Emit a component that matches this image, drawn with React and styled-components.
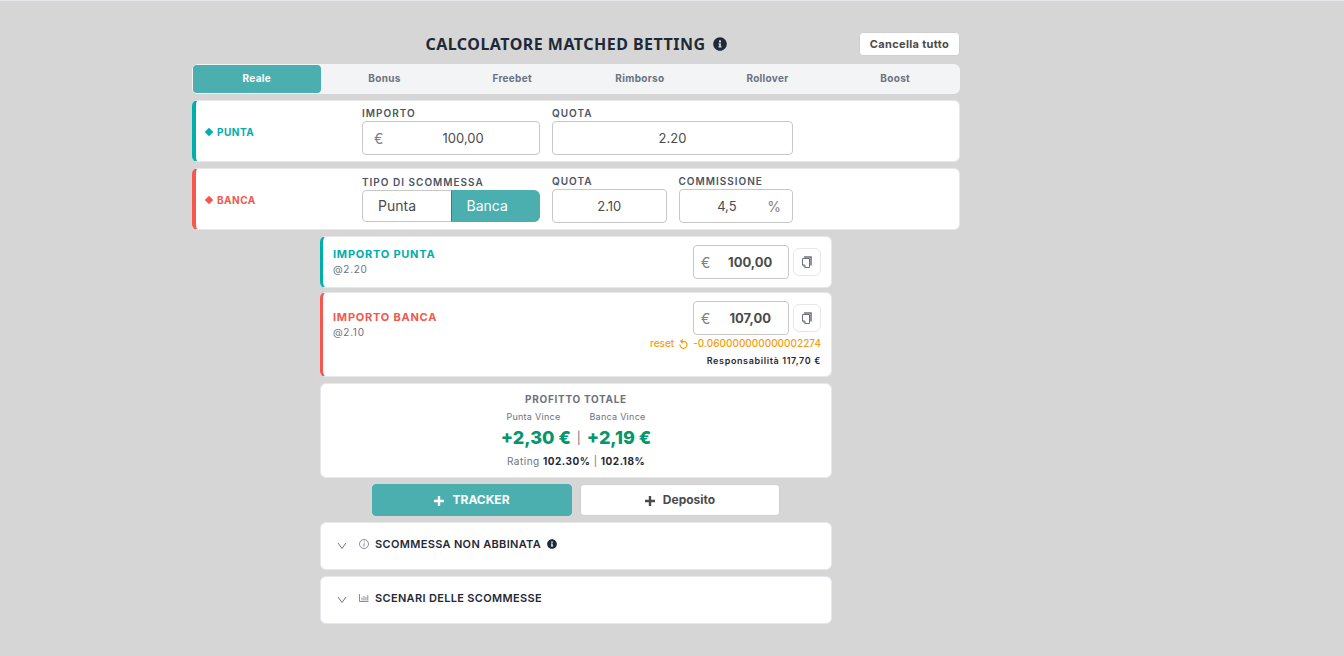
import { useState } from "react";
import styled, { createGlobalStyle } from "styled-components";
import { FaInfoCircle } from "react-icons/fa";

const GlobalStyle = createGlobalStyle`
  *, *::before, *::after {
    box-sizing: border-box;
  }
  body {
    margin: 0;
    background-color: #d6d6d6;
    color: #1f2937;
    font-family: "Inter", sans-serif;
    font-size: 14px;
  }
  button, input {
    font-family: inherit;
  }
`;

const TABS = ["Reale", "Bonus", "Freebet", "Rimborso", "Rollover", "Boost"];

const CopyIcon = () => (
  <svg width="12" height="12" viewBox="0 0 12 12" fill="none" stroke="currentColor" aria-hidden="true">
    <path d="M1.5 2.5H8.5V11.5H4L1.5 9Z" />
    <path d="M1.5 9H4V11.5" />
    <path d="M3 1H10V9.5" strokeWidth="1.5" />
  </svg>
);

const ResetIcon = () => (
  <svg width="9" height="10" viewBox="0 0 9 10" fill="none" stroke="currentColor" strokeWidth="1.2" aria-hidden="true">
    <path d="M1 5.5A3.5 3.5 0 1 0 4.5 2.3H1.8" />
    <path d="M3.8 .4 1.8 2.3 3.8 4.2" />
  </svg>
);

const PlusIcon = () => (
  <svg width="10" height="10" viewBox="0 0 10 10" fill="none" stroke="currentColor" strokeWidth="2.4" aria-hidden="true">
    <path d="M5 0V10M0 5H10" />
  </svg>
);

const ChevronIcon = () => (
  <svg width="10" height="8" viewBox="0 0 10 8" fill="none" stroke="currentColor" aria-hidden="true">
    <path d="M1 1 5 6.5 9 1" />
  </svg>
);

const CircleInfoIcon = () => (
  <svg width="10" height="10" viewBox="0 0 10 10" fill="none" stroke="currentColor" strokeWidth=".8" aria-hidden="true">
    <circle cx="5" cy="5" r="4.5" />
    <path d="M5.4 2.2 5.2 3.2M5.2 4.2 4.8 7.6" />
  </svg>
);

const ChartIcon = () => (
  <svg width="10" height="10" viewBox="0 0 10 10" fill="none" stroke="currentColor" strokeWidth=".8" aria-hidden="true">
    <path d="M.5 1V8.5H9.5" />
    <path d="M3 7.5V4.5M5 7.5V3M7 7.5V4M8.8 7.5V2" />
  </svg>
);

const NumberField = ({ id, label, value, prefix, suffix, wide }) => (
  <Field $wide={wide}>
    <FieldLabel htmlFor={id}>{label}</FieldLabel>
    <InputBox>
      {prefix && <Affix $side="left">{prefix}</Affix>}
      <Input id={id} defaultValue={value} $suffixed={!!suffix} />
      {suffix && <Affix $side="right">{suffix}</Affix>}
    </InputBox>
  </Field>
);

const Amount = ({ label, value }) => (
  <AmountRow>
    <AmountBox>
      <span>€</span>
      <AmountInput aria-label={label} defaultValue={value} />
    </AmountBox>
    <CopyButton type="button" aria-label={`Copia ${label}`}>
      <CopyIcon />
    </CopyButton>
  </AmountRow>
);

const App = () => {
  const [tab, setTab] = useState("Reale");
  const [betType, setBetType] = useState("Banca");

  return (
    <>
      <GlobalStyle />
      <Page>
        <Calculator>
          <Header>
            <Title>
              CALCOLATORE MATCHED BETTING <FaInfoCircle size={14} />
            </Title>
            <ClearButton type="button">Cancella tutto</ClearButton>
          </Header>

          <Tabs>
            {TABS.map((name) => (
              <Tab key={name} type="button" $active={tab === name} onClick={() => setTab(name)}>
                {name}
              </Tab>
            ))}
          </Tabs>

          <BetCard $accent={teal}>
            <BetName $accent={teal}>PUNTA</BetName>
            <Fields>
              <NumberField id="importo" label="IMPORTO" value="100,00" prefix="€" wide />
              <NumberField id="quota-punta" label="QUOTA" value="2.20" />
            </Fields>
          </BetCard>

          <BetCard $accent={red}>
            <BetName $accent={red}>BANCA</BetName>
            <Fields>
              <TypeField>
                <TypeLegend id="tipo">TIPO DI SCOMMESSA</TypeLegend>
                <Toggle role="radiogroup" aria-labelledby="tipo">
                  {["Punta", "Banca"].map((type) => (
                    <ToggleOption key={type} $active={betType === type}>
                      <HiddenRadio
                        type="radio"
                        name="tipo"
                        checked={betType === type}
                        onChange={() => setBetType(type)}
                      />
                      {type}
                    </ToggleOption>
                  ))}
                </Toggle>
              </TypeField>
              <NumberField id="quota-banca" label="QUOTA" value="2.10" />
              <NumberField id="commissione" label="COMMISSIONE" value="4,5" suffix="%" />
            </Fields>
          </BetCard>

          <Results>
            <ResultCard $accent={teal}>
              <ResultHeading>
                <ResultName $accent={teal}>IMPORTO PUNTA</ResultName>
                <Odds>@2.20</Odds>
              </ResultHeading>
              <Amount label="Importo punta" value="100,00" />
            </ResultCard>

            <ResultCard $accent={red}>
              <ResultHeading $lowered>
                <ResultName $accent={red}>IMPORTO BANCA</ResultName>
                <Odds>@2.10</Odds>
              </ResultHeading>
              <ResultSide>
                <Amount label="Importo banca" value="107,00" />
                <ResetButton type="button">
                  reset <ResetIcon /> -0.060000000000002274
                </ResetButton>
                <Liability>Responsabilità 117,70 €</Liability>
              </ResultSide>
            </ResultCard>

            <ProfitCard>
              <ProfitTitle>PROFITTO TOTALE</ProfitTitle>
              <Outcomes>
                <span>Punta Vince</span>
                <span>Banca Vince</span>
              </Outcomes>
              <Profits>
                <Profit>+2,30 €</Profit>
                <span>|</span>
                <Profit>+2,19 €</Profit>
              </Profits>
              <Rating>
                Rating <b>102.30%</b> | <b>102.18%</b>
              </Rating>
            </ProfitCard>

            <Actions>
              <ActionButton type="button" $primary>
                <PlusIcon /> TRACKER
              </ActionButton>
              <ActionButton type="button">
                <PlusIcon /> Deposito
              </ActionButton>
            </Actions>

            <Panel type="button" aria-expanded="false">
              <ChevronIcon />
              <PanelTitle>
                <CircleInfoIcon /> SCOMMESSA NON ABBINATA <InfoMark size={10} />
              </PanelTitle>
            </Panel>
            <Panel type="button" aria-expanded="false">
              <ChevronIcon />
              <PanelTitle>
                <ChartIcon /> SCENARI DELLE SCOMMESSE
              </PanelTitle>
            </Panel>
          </Results>
        </Calculator>
      </Page>
    </>
  );
};

export default App;

const teal = "#00aeab";
const red = "#f4574d";

const Page = styled.main`
  min-height: 100vh;
  border-top: 1px solid #e5e7eb;
  padding: 31px 192px 32px 0;
`;

const Calculator = styled.div`
  display: flex;
  flex-direction: column;
  gap: 6px;
  max-width: 768px;
  margin: 0 auto;
`;

const Header = styled.header`
  display: grid;
  grid-template-columns: 1fr auto 1fr;
  align-items: center;
  height: 24px;
  margin-bottom: 2px;
`;

const Title = styled.h1`
  grid-column: 2;
  display: flex;
  align-items: center;
  gap: 7px;
  margin: 0;
  font-family: "Noto Sans", sans-serif;
  font-size: 16px;
  font-weight: 700;
  line-height: 24px;
  letter-spacing: 0.03em;
`;

const ClearButton = styled.button`
  justify-self: end;
  height: 24px;
  padding: 0 10px;
  border: 1px solid #d0d0d0;
  border-radius: 4px;
  background-color: #fff;
  color: #4b4b4b;
  font-size: 11px;
  font-weight: 700;
  letter-spacing: 0.03em;
  cursor: pointer;
`;

const Tabs = styled.nav`
  display: flex;
  padding: 1px;
  border-radius: 6px;
  background-color: #f3f4f6;
`;

const Tab = styled.button`
  flex: 1;
  height: 28px;
  padding: 0 0 2px;
  border: none;
  border-radius: 4px;
  background-color: ${({ $active }) => ($active ? "#4aafae" : "transparent")};
  color: ${({ $active }) => ($active ? "#fff" : "#6b7280")};
  font-size: 10px;
  font-weight: 700;
  letter-spacing: 0.03em;
  cursor: pointer;
`;

const Card = styled.section`
  border: 1px solid #e5e7eb;
  border-radius: 6px;
  background-color: #fff;
`;

const BetCard = styled(Card)`
  display: grid;
  grid-template-columns: 1fr minmax(0, 431px) 1fr;
  align-items: center;
  padding: 6px 0;
  border-left: 4px solid ${({ $accent }) => $accent};
`;

const BetName = styled.h2`
  display: flex;
  align-items: center;
  gap: 5px;
  margin: 0;
  padding: 2px 0 0 10px;
  color: ${({ $accent }) => $accent};
  font-size: 10px;
  font-weight: 700;
  letter-spacing: 0.05em;

  &::before {
    content: "";
    width: 6px;
    height: 6px;
    background-color: currentColor;
    transform: rotate(45deg);
  }
`;

const Fields = styled.div`
  display: flex;
  align-items: center;
  gap: 12px;
`;

const Field = styled.div`
  flex: ${({ $wide }) => ($wide ? "0 1 178px" : "1 1 0")};
  min-width: 0;
`;

const FieldLabel = styled.label`
  display: block;
  padding-bottom: 2px;
  color: #4b5563;
  font-size: 10px;
  font-weight: 600;
  line-height: 12px;
  letter-spacing: 0.1em;
`;

const InputBox = styled.div`
  display: flex;
  align-items: center;
  height: 34px;
  border: 1px solid #c8c8c8;
  border-radius: 4px;
  background-color: #fff;
`;

const Affix = styled.span`
  color: #808080;
  font-size: 14px;
  padding: ${({ $side }) => ($side === "left" ? "0 4px 0 11px" : "0 11px 0 4px")};
`;

const Input = styled.input`
  flex: 1;
  width: 0;
  min-width: 0;
  padding: ${({ $suffixed }) => ($suffixed ? "0 0 0 11px" : "0 11px")};
  border: none;
  outline: none;
  background: none;
  color: #4b4b4b;
  font-size: 13px;
  text-align: center;
`;

const TypeField = styled(Field)`
  flex: 0 1 178px;
`;

const TypeLegend = styled(FieldLabel).attrs({ as: "div" })``;

const Toggle = styled.div`
  display: flex;
  height: 32px;
`;

const ToggleOption = styled.label`
  position: relative;
  display: flex;
  flex: 1;
  align-items: center;
  padding: 0 15px 1px;
  border: 1px solid ${({ $active }) => ($active ? "#4aafae" : "#c8c8c8")};
  border-left-color: ${({ $active }) => ($active ? "#1677ff" : "#c8c8c8")};
  background-color: ${({ $active }) => ($active ? "#4aafae" : "#fff")};
  color: ${({ $active }) => ($active ? "#fff" : "#4b4b4b")};
  font-size: 14px;
  cursor: pointer;

  &:first-child {
    border-radius: 4px 0 0 4px;
  }
  &:last-child {
    margin-left: -1px;
    border-radius: 0 6px 6px 0;
  }
`;

const HiddenRadio = styled.input`
  position: absolute;
  opacity: 0;
  pointer-events: none;
`;

const Results = styled.div`
  display: flex;
  flex-direction: column;
  gap: 6px;
  width: 100%;
  max-width: 512px;
  margin: 0 auto;
`;

const ResultCard = styled(Card)`
  display: flex;
  justify-content: space-between;
  align-items: flex-start;
  padding: 8px 10px;
  border-left: 3px solid ${({ $accent }) => $accent};

  & + & {
    margin-top: -2px;
  }
`;

const ResultHeading = styled.div`
  padding-top: ${({ $lowered }) => ($lowered ? "8px" : "1px")};
`;

const ResultName = styled.h3`
  margin: 0;
  color: ${({ $accent }) => $accent};
  font-size: 11px;
  font-weight: 700;
  line-height: 16px;
  letter-spacing: 0.07em;
`;

const Odds = styled.div`
  color: #6b7280;
  font-size: 10px;
  line-height: 14px;
  letter-spacing: 0.07em;
`;

const ResultSide = styled.div`
  display: flex;
  flex-direction: column;
  align-items: flex-end;
`;

const AmountRow = styled.div`
  display: flex;
  align-items: center;
  gap: 4px;
`;

const AmountBox = styled(InputBox)`
  width: 96px;
  padding-left: 7px;
  color: #808080;
`;

const AmountInput = styled(Input)`
  padding: 0 10px 0 12px;
  font-weight: 700;
`;

const CopyButton = styled.button`
  display: flex;
  align-items: center;
  justify-content: center;
  width: 28px;
  height: 28px;
  padding: 0;
  border: 1px solid #e5e7eb;
  border-radius: 6px;
  background-color: #fff;
  color: #6b7280;
  cursor: pointer;
`;

const ResetButton = styled.button`
  display: flex;
  align-items: center;
  gap: 5px;
  padding: 0;
  border: none;
  background: none;
  color: #f59e0b;
  font-size: 10px;
  font-weight: 500;
  line-height: 17px;
  cursor: pointer;
`;

const Liability = styled.div`
  padding-top: 1px;
  font-size: 9px;
  font-weight: 600;
  line-height: 15px;
  letter-spacing: 0.07em;
`;

const ProfitCard = styled(Card)`
  display: flex;
  flex-direction: column;
  align-items: center;
  padding: 8px;
  color: #6b7280;
`;

const ProfitTitle = styled.h3`
  margin: 0 0 4px;
  font-size: 10px;
  font-weight: 700;
  line-height: 14px;
  letter-spacing: 0.07em;
`;

const Outcomes = styled.div`
  display: flex;
  gap: 29px;
  font-size: 9px;
  line-height: 14px;
  letter-spacing: 0.03em;
`;

const Profits = styled.div`
  display: flex;
  align-items: center;
  gap: 6px;
  font-size: 12px;
  line-height: 28px;
`;

const Profit = styled.strong`
  color: #059669;
  font-size: 18px;
  font-weight: 800;
`;

const Rating = styled.div`
  margin-top: 1px;
  font-size: 10px;
  line-height: 16px;
  letter-spacing: 0.05em;

  b {
    color: #1f2937;
    font-weight: 700;
  }
`;

const Actions = styled.div`
  display: flex;
  justify-content: center;
  gap: 8px;
`;

const ActionButton = styled.button`
  display: flex;
  align-items: center;
  justify-content: center;
  gap: 8px;
  width: 200px;
  height: 32px;
  padding: 0 0 2px;
  border: 1px solid ${({ $primary }) => ($primary ? "#4aafae" : "#d0d0d0")};
  border-radius: 4px;
  background-color: ${({ $primary }) => ($primary ? "#4aafae" : "#fff")};
  color: ${({ $primary }) => ($primary ? "#fff" : "#4b4b4b")};
  font-size: 12px;
  font-weight: 700;
  cursor: pointer;

  svg {
    margin-top: 4px;
  }
`;

const Panel = styled.button`
  display: flex;
  align-items: center;
  gap: 12px;
  width: 100%;
  height: 48px;
  padding: 0 16px;
  border: 1px solid #e5e7eb;
  border-radius: 6px;
  background-color: #fff;
  color: #6b7280;
  text-align: left;
  cursor: pointer;
`;

const PanelTitle = styled.span`
  display: flex;
  align-items: center;
  gap: 6px;
  padding-bottom: 4px;
  color: #1f2937;
  font-size: 11px;
  font-weight: 600;
  letter-spacing: 0.03em;

  svg {
    color: #6b7280;
  }
`;

const InfoMark = styled(FaInfoCircle)`
  && {
    color: #1f2937;
  }
`;
